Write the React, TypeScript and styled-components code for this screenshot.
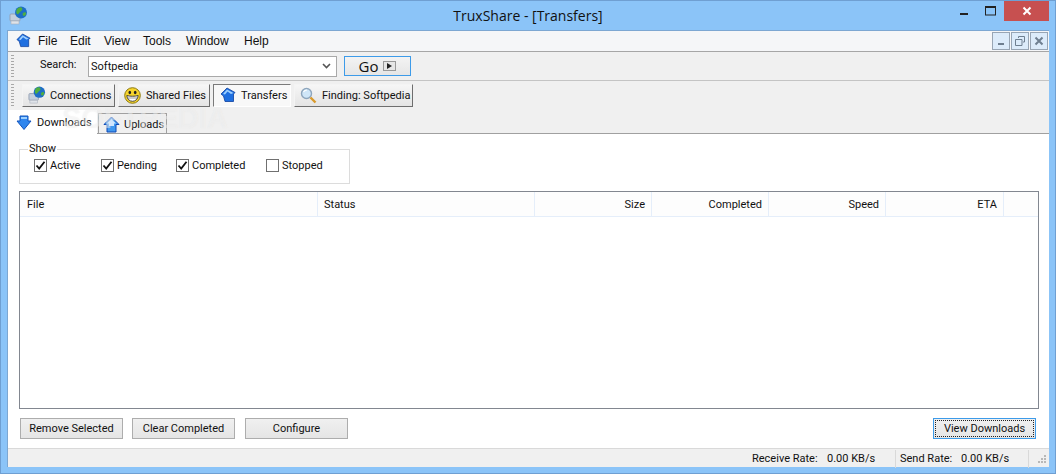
import React from "react";
import styled, { createGlobalStyle } from "styled-components";

const GlobalStyle = createGlobalStyle`
  html, body { margin: 0; padding: 0; overflow: hidden; }
  body { font-family: Roboto, "Liberation Sans", Arial, sans-serif; font-size: 11px; color: #111; }
  svg { flex: none; display: block; }
`;

const Win = styled.div`
  box-sizing: border-box;
  width: 1056px;
  height: 474px;
  background: #8bc4f8;
  border: 1px solid #6f9fd2;
  display: flex;
  flex-direction: column;
  padding: 0 6px 6px;
`;

const TitleBar = styled.div`
  height: 29px;
  display: flex;
  align-items: flex-start;
  position: relative;
  flex: none;
`;

const AppIcon = styled.div`
  margin: 5px 0 0 2px;
  width: 19px;
  height: 20px;
`;

const TitleText = styled.div`
  position: absolute;
  left: 0;
  right: 0;
  top: 5px;
  text-align: center;
  font-family: "Open Sans", sans-serif;
  font-size: 14px;
  line-height: 19px;
  color: #111;
`;

const Caption = styled.div`
  margin-left: auto;
  display: flex;
  position: relative;
`;

const CaptionBtn = styled.div<{ $w: number; $close?: boolean }>`
  width: ${(p) => p.$w}px;
  height: 20px;
  background: ${(p) => (p.$close ? "#c75050" : "transparent")};
  display: flex;
  align-items: center;
  justify-content: center;
`;

const Client = styled.div`
  flex: 1;
  min-height: 0;
  display: flex;
  flex-direction: column;
  border: 1px solid #7da7d2;
  border-width: 1px 0 0 1px;
  background: #f0f0f0;
  position: relative;
`;

const MenuBar = styled.div`
  height: 20px;
  background: #f5f6f8;
  display: flex;
  align-items: center;
  padding-left: 8px;
  padding-right: 1px;
  border-bottom: 1px solid #a6a6a6;
  flex: none;
  font-family: "Liberation Sans", Arial, sans-serif;
  font-size: 12px;
`;

const MenuItem = styled.span<{ $w: number }>`
  width: ${(p) => p.$w}px;
  flex: none;
`;

const MenuIconBox = styled.div`
  width: 22px;
  height: 16px;
  flex: none;
`;

const MdiGroup = styled.div`
  margin-left: auto;
  display: flex;
  gap: 1px;
`;

const MdiBtn = styled.div`
  box-sizing: border-box;
  width: 18px;
  height: 18px;
  border: 1px solid #98a5b4;
  background: #dcebfa;
  display: flex;
  align-items: center;
  justify-content: center;
`;

const ToolRow = styled.div<{ $h: number }>`
  height: ${(p) => p.$h}px;
  flex: none;
  display: flex;
  align-items: center;
  position: relative;
  border-bottom: 1px solid #c4c4c4;
  padding-left: 3px;
`;

const Grip = styled.div`
  width: 3px;
  height: 22px;
  flex: none;
  background: repeating-linear-gradient(to bottom, #a8a8a8 0 1px, transparent 1px 3px);
`;

const SearchLabel = styled.span`
  margin-left: 26px;
  width: 48px;
  margin-top: -3px;
  flex: none;
`;

const Combo = styled.div`
  box-sizing: border-box;
  width: 249px;
  height: 21px;
  background: #fff;
  border: 1px solid #a9a9a9;
  display: flex;
  align-items: center;
  padding: 0 2px 0 2px;
  flex: none;
`;

const ComboArrow = styled.svg`
  margin-left: auto;
  margin-right: 3px;
`;

const GoBtn = styled.div`
  box-sizing: border-box;
  width: 67px;
  height: 20px;
  margin-left: 7px;
  border: 1px solid #3d9be9;
  background: linear-gradient(#f3f3f3, #e6e6e6);
  display: flex;
  align-items: center;
  justify-content: center;
  gap: 5px;
  font-family: "Open Sans", sans-serif;
  font-size: 15px;
  flex: none;
`;

const ViewStrip = styled.div`
  height: 27px;
  flex: none;
  display: flex;
  align-items: center;
  padding-left: 3px;
`;

const ViewButtons = styled.div`
  display: flex;
  gap: 3px;
  margin-left: 8px;
  margin-top: 1px;
`;

const ViewBtn = styled.div<{ $w: number; $active?: boolean }>`
  box-sizing: border-box;
  width: ${(p) => p.$w}px;
  height: 23px;
  display: flex;
  align-items: center;
  white-space: nowrap;
  background: ${(p) => (p.$active ? "#f8f8f8" : "linear-gradient(#f6f6f6, #e4e4e4)")};
  border: 1px solid;
  border-color: ${(p) =>
    p.$active ? "#7a7a7a #fff #fff #7a7a7a" : "#f4f4f4 #6e6e6e #6e6e6e #f4f4f4"};
  flex: none;
`;

const ViewIcon = styled.span`
  width: 27px;
  height: 19px;
  flex: none;
  display: flex;
  align-items: center;
  justify-content: center;
`;

const TabStrip = styled.div`
  height: 25px;
  flex: none;
  display: flex;
  align-items: flex-end;
  border-bottom: 1px solid #a0a0a0;
`;

const ActiveTab = styled.div`
  width: 89px;
  height: 24px;
  margin-bottom: -1px;
  display: flex;
  align-items: center;
  padding: 1px 0 0 8px;
  box-sizing: border-box;
  background: #fff;
  gap: 5px;
  position: relative;
  white-space: nowrap;
`;

const IdleTab = styled.div`
  box-sizing: border-box;
  width: 69px;
  height: 20px;
  margin-left: 1px;
  border: 1px solid #a0a0a0;
  border-bottom: 0;
  display: flex;
  align-items: center;
  padding: 1px 0 0 4px;
  gap: 4px;
  background: #f0f0f0;
`;

const Watermark = styled.div`
  position: absolute;
  left: 54px;
  top: 70px;
  font-family: "Liberation Sans", Arial, sans-serif;
  font-weight: 700;
  font-size: 29px;
  line-height: 34px;
  color: rgba(255, 255, 255, 0.35);
  text-shadow: 0 0 1px rgba(200, 200, 200, 0.25);
  pointer-events: none;
`;

const Content = styled.div`
  flex: 1;
  min-height: 0;
  background: #fff;
  padding: 8px 10px 8px 11px;
  display: flex;
  flex-direction: column;
`;

const ShowGroup = styled.fieldset`
  box-sizing: border-box;
  width: 331px;
  height: 42px;
  margin: 0;
  padding: 0 0 0 14px;
  border: 1px solid #dcdcdc;
  display: flex;
  align-items: center;
  flex: none;
  legend {
    margin-left: -6px;
    padding: 0 1px;
    line-height: 14px;
  }
`;

const CheckRow = styled.label<{ $w: number }>`
  width: ${(p) => p.$w}px;
  display: flex;
  align-items: center;
  gap: 3px;
  flex: none;
  margin-top: 3px;
`;

const Box = styled.span`
  box-sizing: border-box;
  width: 13px;
  height: 13px;
  border: 1px solid #707070;
  background: #fff;
  display: flex;
  align-items: center;
  justify-content: center;
`;

const ListFrame = styled.div`
  margin-top: 7px;
  flex: 1;
  min-height: 0;
  border: 1px solid #828790;
  background: #fff;
`;

const HeaderRow = styled.div`
  height: 25px;
  box-sizing: border-box;
  display: grid;
  grid-template-columns: 298px 217px 117px 117px 117px 118px 1fr;
  border-bottom: 1px solid #e5eefa;
  background: #fdfdfd;
`;

const HeaderCell = styled.div<{ $right?: boolean }>`
  border-right: 1px solid #e5eefa;
  display: flex;
  align-items: center;
  justify-content: ${(p) => (p.$right ? "flex-end" : "flex-start")};
  padding: 0 6px 0 6px;
  &:first-child { padding-left: 7px; }
  &:last-child { border-right: 0; }
`;

const Footer = styled.div`
  display: flex;
  margin-top: 9px;
  height: 22px;
  flex: none;
  padding-left: 1px;
  padding-right: 3px;
`;

const PushBtn = styled.div<{ $gap?: number; $focus?: boolean }>`
  box-sizing: border-box;
  width: 103px;
  height: 21px;
  border: 1px solid ${(p) => (p.$focus ? "#3d9be9" : "#adadad")};
  background: linear-gradient(#f0f0f0, #e5e5e5);
  display: flex;
  align-items: center;
  justify-content: center;
  position: relative;
  flex: none;
  margin-right: ${(p) => p.$gap ?? 0}px;
  &:last-child { margin-left: auto; }
  ${(p) =>
    p.$focus &&
    `&::after { content: ""; position: absolute; inset: 1px; border: 1px dotted #222; }`}
`;

const StatusBar = styled.div`
  height: 19px;
  flex: none;
  box-sizing: border-box;
  border-top: 1px solid #d9d9d9;
  background: #f0f0f0;
  display: flex;
  align-items: center;
  justify-content: flex-end;
  padding-top: 1px;
`;

const StatusCell = styled.div<{ $w: number; $label: number }>`
  width: ${(p) => p.$w}px;
  box-sizing: border-box;
  flex: none;
  height: 18px;
  display: flex;
  align-items: center;
  padding-left: 4px;
  border-right: 1px solid #d9d9d9;
  span:first-child { width: ${(p) => p.$label}px; flex: none; }
`;

const SizeGrip = styled.svg`
  width: 20px;
  height: 18px;
  flex: none;
`;

const Globe = ({ size = 19 }: { size?: number }) => (
  <svg width={size} height={size} viewBox="0 0 19 19">
    <rect x="1" y="8" width="10" height="7" rx="1" fill="#c4cfdd" stroke="#97a3b5" />
    <rect x="2" y="15" width="8" height="3" fill="#dfe3e9" stroke="#a8afba" strokeWidth=".6" />
    <circle cx="12" cy="6.5" r="6" fill="#1d6ec6" />
    <path d="M8 3c2-2 4-2 5-1 1 2-1 3-2 4s-2 3-3 2-1-3 0-5zM14 7c1-1 3-1 3 0 0 2-1 3-2 3s-2-2-1-3z" fill="#4fae3f" />
  </svg>
);

const House = ({ size = 16 }: { size?: number }) => (
  <svg width={size} height={size} viewBox="0 0 16 16">
    <path d="M7 1 15 5.500 13.500 7v7.500H5L3.500 9 1 7z" fill="#1f6fe0" stroke="#0c3f9e" strokeWidth=".8" />
    <path d="M7 2.500 3 7l2 .5 2.500-3L11 7l2.500-1z" fill="#9ed0ff" />
  </svg>
);

const UpHouse = () => (
  <svg width="17" height="17" viewBox="0 0 17 17">
    <path d="M8.500 1 16 8.500h-3V16H4V8.500H1z" fill="#3f97ef" stroke="#1148b4" strokeWidth="1" />
    <path d="M8.500 3 4 7.500h2V10h5V7.500h2z" fill="#cfe6ff" />
  </svg>
);

const DownArrow = () => (
  <svg width="16" height="15" viewBox="0 0 16 15">
    <path d="M4 1h8v5h3l-7 8.500L1 6h3z" fill="#2f86ee" stroke="#1354bd" strokeWidth="1" />
    <path d="M5 2h6v2H5z" fill="#9cd0ff" />
  </svg>
);

const Smiley = () => (
  <svg width="17" height="17" viewBox="0 0 17 17">
    <circle cx="8.500" cy="8.500" r="7.800" fill="#f7d52c" stroke="#8d7a10" />
    <ellipse cx="5.800" cy="5.500" rx="1.300" ry="1.800" fill="#222" />
    <ellipse cx="11.200" cy="5.500" rx="1.300" ry="1.800" fill="#222" />
    <path d="M2.800 8.500c2.500 1 9 1 11.400 0-.3 3.500-2.700 5.800-5.700 5.800s-5.400-2.300-5.700-5.800z" fill="#fff" stroke="#333" strokeWidth=".9" />
    <path d="M3.500 11h10" stroke="#555" strokeWidth=".6" />
  </svg>
);

const Magnifier = () => (
  <svg width="17" height="17" viewBox="0 0 17 17">
    <circle cx="6.500" cy="6.500" r="5" fill="#cfe6f8" stroke="#8ea6bd" strokeWidth="1.400" />
    <path d="M3.500 5c.8-1.500 2-2 3.500-2" stroke="#fff" strokeWidth="1.200" fill="none" />
    <path d="M10.500 10.500 15.500 15.500" stroke="#d99a2b" strokeWidth="2.400" />
  </svg>
);

const Check = () => (
  <svg width="11" height="11" viewBox="0 0 11 11">
    <path d="M1.500 5.500 4.200 8.500 9.500 1.800" fill="none" stroke="#111" strokeWidth="1.800" />
  </svg>
);

const checks = [
  { label: "Active", w: 67, on: true },
  { label: "Pending", w: 75, on: true },
  { label: "Completed", w: 90, on: true },
  { label: "Stopped", w: 70, on: false },
];

const columns = [
  { label: "File" },
  { label: "Status" },
  { label: "Size", right: true },
  { label: "Completed", right: true },
  { label: "Speed", right: true },
  { label: "ETA", right: true },
  { label: "" },
];

const menus = [
  { label: "File", w: 32 },
  { label: "Edit", w: 34 },
  { label: "View", w: 39 },
  { label: "Tools", w: 43 },
  { label: "Window", w: 58 },
  { label: "Help", w: 40 },
];

const App = () => (
  <>
    <GlobalStyle />
    <Win>
      <TitleBar>
        <AppIcon>
          <Globe />
        </AppIcon>
        <TitleText>TruxShare - [Transfers]</TitleText>
        <Caption>
          <CaptionBtn $w={26}>
            <svg width="10" height="10" viewBox="0 0 10 10">
              <rect x="1" y="7" width="8" height="2" fill="#222" />
            </svg>
          </CaptionBtn>
          <CaptionBtn $w={27}>
            <svg width="11" height="10" viewBox="0 0 11 10">
              <rect x=".5" y="1" width="10" height="8" fill="none" stroke="#222" />
              <rect x="0" y="0" width="11" height="2" fill="#222" />
            </svg>
          </CaptionBtn>
          <CaptionBtn $w={45} $close>
            <svg width="10" height="10" viewBox="0 0 10 10">
              <path d="M1.500 1.500 8.500 8.500M8.500 1.500 1.500 8.500" stroke="#fff" strokeWidth="2" />
            </svg>
          </CaptionBtn>
        </Caption>
      </TitleBar>
      <Client>
        <MenuBar>
          <MenuIconBox>
            <House size={15} />
          </MenuIconBox>
          {menus.map((m) => (
            <MenuItem key={m.label} $w={m.w}>
              {m.label}
            </MenuItem>
          ))}
          <MdiGroup>
            <MdiBtn>
              <svg width="10" height="10" viewBox="0 0 10 10">
                <rect x="2" y="7" width="6" height="2" fill="#6f7f90" />
              </svg>
            </MdiBtn>
            <MdiBtn>
              <svg width="10" height="10" viewBox="0 0 10 10">
                <path d="M3.500 2V.5h6V6H8M.5 3.500h6.500V9.500H.5z" fill="none" stroke="#6f7f90" />
              </svg>
            </MdiBtn>
            <MdiBtn>
              <svg width="10" height="10" viewBox="0 0 10 10">
                <path d="M1.500 1.500 8.500 8.500M8.500 1.500 1.500 8.500" stroke="#6f7f90" strokeWidth="2" />
              </svg>
            </MdiBtn>
          </MdiGroup>
        </MenuBar>
        <ToolRow $h={28}>
          <Grip />
          <SearchLabel>Search:</SearchLabel>
          <Combo>
            Softpedia
            <ComboArrow width="9" height="6" viewBox="0 0 9 6">
              <path d="M1 1 4.500 4.500 8 1" fill="none" stroke="#555" strokeWidth="1.600" />
            </ComboArrow>
          </Combo>
          <GoBtn>
            Go
            <svg width="13" height="10" viewBox="0 0 13 10">
              <rect x=".5" y=".5" width="12" height="9" fill="#e6e6e6" stroke="#999" />
              <path d="M4 2 9 5 4 8z" fill="#222" />
            </svg>
          </GoBtn>
        </ToolRow>
        <ViewStrip>
          <Grip />
          <ViewButtons>
            <ViewBtn $w={93}>
              <ViewIcon>
                <Globe size={18} />
              </ViewIcon>
              Connections
            </ViewBtn>
            <ViewBtn $w={92}>
              <ViewIcon>
                <Smiley />
              </ViewIcon>
              Shared Files
            </ViewBtn>
            <ViewBtn $w={78} $active>
              <ViewIcon>
                <House />
              </ViewIcon>
              Transfers
            </ViewBtn>
            <ViewBtn $w={119}>
              <ViewIcon>
                <Magnifier />
              </ViewIcon>
              Finding: Softpedia
            </ViewBtn>
          </ViewButtons>
        </ViewStrip>
        <TabStrip>
          <ActiveTab>
            <DownArrow />
            Downloads
          </ActiveTab>
          <IdleTab>
            <UpHouse />
            Uploads
          </IdleTab>
        </TabStrip>
        <Watermark>SOFTPEDIA</Watermark>
        <Content>
          <ShowGroup>
            <legend>Show</legend>
            {checks.map((c) => (
              <CheckRow key={c.label} $w={c.w}>
                <Box>{c.on && <Check />}</Box>
                {c.label}
              </CheckRow>
            ))}
          </ShowGroup>
          <ListFrame>
            <HeaderRow>
              {columns.map((c, i) => (
                <HeaderCell key={i} $right={c.right}>
                  {c.label}
                </HeaderCell>
              ))}
            </HeaderRow>
          </ListFrame>
          <Footer>
            <PushBtn $gap={9}>Remove Selected</PushBtn>
            <PushBtn $gap={10}>Clear Completed</PushBtn>
            <PushBtn>Configure</PushBtn>
            <PushBtn $focus>View Downloads</PushBtn>
          </Footer>
        </Content>
        <StatusBar>
          <StatusCell $w={148} $label={75}>
            <span>Receive Rate:</span>
            <span>0.00 KB/s</span>
          </StatusCell>
          <StatusCell $w={133} $label={61}>
            <span>Send Rate:</span>
            <span>0.00 KB/s</span>
          </StatusCell>
          <SizeGrip viewBox="0 0 20 18">
            <path d="M15 5h2v2h-2zM12 8h2v2h-2zM15 8h2v2h-2zM9 11h2v2H9zM12 11h2v2h-2zM15 11h2v2h-2z" fill="#b8b8b8" />
          </SizeGrip>
        </StatusBar>
      </Client>
    </Win>
  </>
);

export default App;
